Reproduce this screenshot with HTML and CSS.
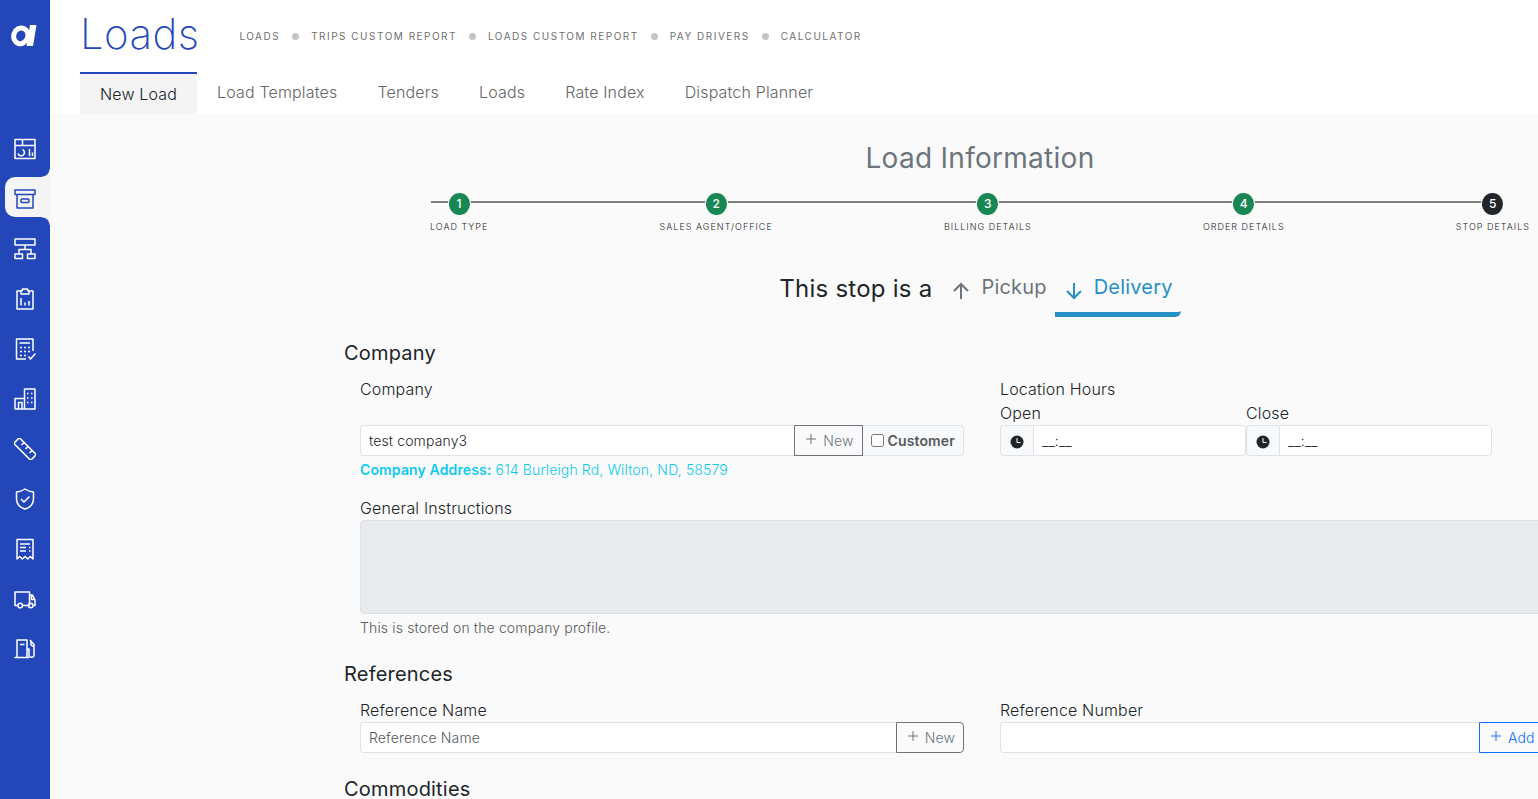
FILE: index.html
```html
<!DOCTYPE html>
<html lang="en">
<head>
<meta charset="utf-8">
<title>Loads</title>
<link rel="stylesheet" href="styles.css">
</head>
<body>
<div class="app">
  <aside class="sidebar">
    <a class="logo" href="#" aria-label="Home">
      <svg width="26" height="24" viewBox="0 0 26 24" fill="none" stroke="#fff"><ellipse cx="9.800" cy="12.800" rx="7" ry="8" stroke-width="5" transform="rotate(20 9.800 12.800)"/><path d="M19 2H25.500L22 23H15.500Z" fill="#fff" stroke="none"/></svg>
    </a>
    <nav class="side-nav">
      <a class="side-link" href="#" aria-label="Dashboard"><svg class="icon" viewBox="0 0 22 22"><path d="M1 1.500H21V20.500H1ZM1 7.500H21M8.500 1.500V7.500M15.500 11V18M18.500 14.500V18M8.500 11.500A3.300 3.300 0 1 1 4 15.500"/></svg></a>
      <a class="side-link active" href="#" aria-label="Loads"><svg class="icon" viewBox="0 0 22 22"><path d="M1 2H21V6.500H1ZM3 6.500V20H19V6.500"/><rect x="7" y="11" width="8" height="3.500" rx="1"/></svg></a>
      <a class="side-link" href="#" aria-label="Dispatch"><svg class="icon" viewBox="0 0 22 22"><path d="M1 1H21V7H1ZM11 7V11.500M5 16V11.500H17V16M1 16H8.500V20.500H1ZM13.500 16H21V20.500H13.500Z"/></svg></a>
      <a class="side-link" href="#" aria-label="Reports"><svg class="icon" viewBox="0 0 22 22"><path d="M7 3H3V21H19V3H15M7 2.500H8.500V1H13.500V2.500H15V6H7ZM7 10V17.500M11 14.500V17.500M15 13V17.500"/></svg></a>
      <a class="side-link" href="#" aria-label="Accounting"><svg class="icon" viewBox="0 0 22 22"><path d="M12 21H2.500V1H19V13M5.500 5H16M14.500 18.500L16.500 21L21.500 15.500"/><path class="dots" d="M6 9.500H8M10 9.500H12M14 9.500H16M6 13.500H8M10 13.500H12M14 13.500H16M6 17.500H8M10 17.500H12"/></svg></a>
      <a class="side-link" href="#" aria-label="Companies"><svg class="icon" viewBox="0 0 22 22"><path d="M1 21V10.500H10.500V1H21V21ZM10.500 10.500V21M4.500 21V14.500H8V21"/><path class="dots" d="M13 5.500H14.500M17 5.500H18.500M13 10H14.500M17 10H18.500M13 14.500H14.500M17 14.500H18.500"/></svg></a>
      <a class="side-link" href="#" aria-label="Mileage"><svg class="icon" viewBox="0 0 22 22"><rect x="-1" y="7" width="24" height="8" rx="1" transform="rotate(45 11 11)"/><path d="M10 4.500L7.500 7M14 8.500L11.500 11M18 12.500L15.500 15"/></svg></a>
      <a class="side-link" href="#" aria-label="Safety"><svg class="icon" viewBox="0 0 22 22"><path d="M11 1C14 3 17 3.700 19.500 4V11C19.500 16 16 20 11 21C6 20 2.500 16 2.500 11V4C5 3.700 8 3 11 1ZM7 11L10 14L15.500 8.500"/></svg></a>
      <a class="side-link" href="#" aria-label="Invoices"><svg class="icon" viewBox="0 0 22 22"><path d="M3 21V1.500H19V21L16.300 18.500L13.700 21L11 18.500L8.300 21L5.700 18.500ZM6 6H16M6 9.500H12M6 13H12M15 9.500H16.500M15 13H16.500"/></svg></a>
      <a class="side-link" href="#" aria-label="Trucks"><svg class="icon" viewBox="0 0 22 22"><path d="M3.500 17.500H1V4H15.500V17.500H9M15.500 7H18.500L21 12V17.500H19.500M17.500 7V11.500H21"/><circle cx="6.200" cy="17.500" r="2.300"/><circle cx="16.700" cy="17.500" r="2.300"/></svg></a>
      <a class="side-link" href="#" aria-label="Fuel"><svg class="icon" viewBox="0 0 22 22"><path d="M0.500 19.500H15M3 19.500V2H13V19.500M6 6.500H10.500M13 11H15V17C15 20 20 20 20 17V6.500L16 2M17 3V7L20 9"/></svg></a>
    </nav>
  </aside>

  <main class="page">
    <header class="page-head">
      <div class="title-row">
        <h1 class="title">Loads</h1>
        <nav class="crumbs">
          <a href="#">Loads</a><i></i><a href="#">Trips Custom Report</a><i></i><a href="#">Loads Custom Report</a><i></i><a href="#">Pay Drivers</a><i></i><a href="#">Calculator</a>
        </nav>
      </div>
      <nav class="tabs">
        <a class="tab current" href="#">New Load</a>
        <a class="tab" href="#">Load Templates</a>
        <a class="tab" href="#">Tenders</a>
        <a class="tab" href="#">Loads</a>
        <a class="tab" href="#">Rate Index</a>
        <a class="tab" href="#">Dispatch Planner</a>
      </nav>
    </header>

    <form class="content">
      <h2 class="form-title">Load Information</h2>
      <ol class="steps">
        <li class="step"><span class="num">1</span>Load Type</li>
        <li class="step"><span class="num">2</span>Sales Agent/Office</li>
        <li class="step"><span class="num">3</span>Billing Details</li>
        <li class="step"><span class="num">4</span>Order Details</li>
        <li class="step now"><span class="num">5</span>Stop Details</li>
      </ol>

      <div class="stop-type">
        <span class="stop-lead">This stop is a</span>
        <button class="stop-option" type="button"><svg class="arrow" viewBox="0 0 18 18"><path d="M9 17V2M2 9L9 2L16 9"/></svg>Pickup</button>
        <button class="stop-option chosen" type="button"><svg class="arrow" viewBox="0 0 18 18"><path d="M9 1V16M2 9L9 16L16 9"/></svg>Delivery</button>
      </div>

      <section class="section">
        <h3 class="section-title">Company</h3>
        <div class="fields">
          <div class="field">
            <label class="tall" for="company">Company</label>
            <div class="group">
              <input class="control" id="company" type="text" value="test company3">
              <button class="btn" type="button"><svg class="plus" viewBox="0 0 12 12"><path d="M6 1V11M1 6H11"/></svg>New</button>
              <label class="addon check"><input type="checkbox">Customer</label>
            </div>
            <p class="address"><strong>Company Address:</strong> 614 Burleigh Rd, Wilton, ND, 58579</p>
          </div>
          <div class="field">
            <span class="label">Location Hours</span>
            <div class="hours">
              <div class="field">
                <label for="open">Open</label>
                <div class="group"><span class="addon clock"><svg viewBox="0 0 14 14"><circle cx="7" cy="7" r="6.500"/><path d="M7 3V7.500H10.500"/></svg></span><input class="control" id="open" type="text" value="__:__"></div>
              </div>
              <div class="field">
                <label for="close">Close</label>
                <div class="group"><span class="addon clock"><svg viewBox="0 0 14 14"><circle cx="7" cy="7" r="6.500"/><path d="M7 3V7.500H10.500"/></svg></span><input class="control" id="close" type="text" value="__:__"></div>
              </div>
            </div>
          </div>
          <div class="field wide">
            <label for="instructions">General Instructions</label>
            <textarea class="control area" id="instructions" disabled></textarea>
            <p class="hint">This is stored on the company profile.</p>
          </div>
        </div>
      </section>

      <section class="section">
        <h3 class="section-title">References</h3>
        <div class="fields">
          <div class="field">
            <label for="ref-name">Reference Name</label>
            <div class="group">
              <input class="control" id="ref-name" type="text" placeholder="Reference Name">
              <button class="btn" type="button"><svg class="plus" viewBox="0 0 12 12"><path d="M6 1V11M1 6H11"/></svg>New</button>
            </div>
          </div>
          <div class="field ref-number">
            <label for="ref-number">Reference Number</label>
            <div class="group">
              <input class="control" id="ref-number" type="text">
              <button class="btn primary" type="button"><svg class="plus" viewBox="0 0 12 12"><path d="M6 1V11M1 6H11"/></svg>Add</button>
            </div>
          </div>
        </div>
      </section>

      <section class="section">
        <h3 class="section-title">Commodities</h3>
      </section>
    </form>
  </main>
</div>
</body>
</html>
```
FILE: styles.css
```css
* { box-sizing: border-box; letter-spacing: 0.01em; }

body {
  margin: 0;
  overflow: hidden;
  background: #fafafa;
  color: #212529;
  font: 300 16px/24px Inter, "Liberation Sans", sans-serif;
}

a { color: inherit; text-decoration: none; }
h1, h2, h3, p, ol { margin: 0; padding: 0; }
button, input, textarea { font: inherit; color: inherit; }

.app { display: flex; height: 100vh; }

/* Sidebar */
.sidebar {
  flex: 0 0 50px;
  background: #2347b9;
  color: #fff;
}
.logo { display: flex; justify-content: center; padding: 23px 2px 0 0; height: 124px; }
.side-nav { display: flex; flex-direction: column; }
.side-link {
  position: relative;
  display: flex;
  align-items: center;
  justify-content: center;
  height: 50px;
}
.icon {
  position: relative;
  width: 22px;
  height: 22px;
  fill: none;
  stroke: currentColor;
  stroke-width: 1.5;
  stroke-linejoin: round;
}
.side-link.active { color: #2347b9; }
.side-link.active::before {
  content: "";
  position: absolute;
  inset: 3px 0 7px 5px;
  border-radius: 10px 0 0 10px;
  background: #f4f4f4;
}
.side-link.active::after {
  content: "";
  position: absolute;
  top: -5px;
  right: 0;
  width: 8px;
  height: 56px;
  background:
    radial-gradient(circle at 0 0, transparent 7px, #f4f4f4 8px) top / 8px 8px no-repeat,
    radial-gradient(circle at 0 100%, transparent 7px, #f4f4f4 8px) bottom / 8px 8px no-repeat;
}

/* Page header */
.page { flex: 1 0 1860px; }
.page-head { padding: 0 30px; background: #fff; }
.title-row { display: flex; align-items: center; height: 72px; gap: 40px; }
.title { color: #2347b9; font-size: 42px; font-weight: 200; line-height: 68px; height: 72px; }
.crumbs {
  display: flex;
  align-items: center;
  gap: 12px;
  color: #707070;
  font-size: 10px;
  font-weight: 400;
  text-transform: uppercase;
}
.crumbs a { letter-spacing: 1.5px; }
.crumbs i { width: 7px; height: 7px; border-radius: 50%; background: #c4c4c4; }
.tabs { display: flex; }
.tab { padding: 8px 20px; color: #666; }
.tab.current { border-top: 2px solid #2347b9; background: #f4f4f4; color: #212529; }

/* Form */
.content { width: 1272px; margin: 0 auto; padding-top: 27px; }
.form-title {
  color: #6c757d;
  font-size: 28px;
  font-weight: 400;
  line-height: 34px;
  text-align: center;
}

.steps {
  position: relative;
  display: flex;
  justify-content: space-between;
  width: 1100px;
  margin: 18px auto 0;
  list-style: none;
  font-size: 9px;
  line-height: 12px;
  text-transform: uppercase;
}
.steps::before {
  content: "";
  position: absolute;
  inset: 8px 48px auto 1px;
  height: 2px;
  background: #7b807c;
}
.step {
  position: relative;
  display: flex;
  flex-direction: column;
  align-items: center;
  gap: 6px;
  letter-spacing: 1px;
}
.num {
  width: 21px;
  height: 22px;
  border-radius: 50%;
  box-shadow: 0 0 0 1px #fafafa;
  background: #198754;
  color: #fff;
  font-size: 12px;
  font-weight: 500;
  line-height: 22px;
  text-align: center;
}
.step.now .num { background: #212529; }

.stop-type { display: flex; justify-content: center; margin-top: 34px; }
.stop-lead { margin-right: 10px; font-size: 24px; font-weight: 400; line-height: 44px; }
.stop-option {
  display: flex;
  align-items: center;
  gap: 11px;
  height: 50px;
  padding: 0 8px 6px 10px;
  border: 0;
  border-bottom: 5px solid transparent;
  border-radius: 0 0 6px 0;
  background: none;
  color: #6c757d;
  font-size: 20px;
  font-weight: 400;
}
.stop-option.chosen { border-color: #268fc3; color: #268fc3; }
.arrow { width: 18px; height: 18px; margin-top: 8px; fill: none; stroke: currentColor; stroke-width: 2; }

.section { margin-top: 24px; }
.section-title { margin-bottom: 12px; font-size: 20px; font-weight: 400; }
.fields { display: grid; grid-template-columns: repeat(2, 1fr); gap: 16px 36px; padding: 0 12px 0 16px; }
.fields .wide { grid-column: 1 / -1; }
.ref-number { width: 90%; }
.field { display: flex; flex-direction: column; }
label.tall { padding-bottom: 24px; }
.hours { display: grid; grid-template-columns: repeat(2, 246px); }

.group { display: flex; height: 31px; }
.control {
  flex: 1;
  min-width: 0;
  padding: 4px 8px;
  border: 1px solid #dee2e6;
  border-radius: 4px;
  background: #fff;
  font-size: 14px;
}
.control::placeholder { color: #55595d; opacity: 1; }
.group .control:first-child { border-radius: 4px 0 0 4px; border-right: 0; }
.group .control:last-child { border-radius: 0 4px 4px 0; }
.area { flex: none; height: 94px; background: #e8ebee; resize: none; }

.btn {
  display: flex;
  align-items: center;
  gap: 6px;
  padding: 0 8px 0 10px;
  border: 1px solid #6c757d;
  background: none;
  color: #6c757d;
  font-size: 14px;
}
.btn:last-child { border-radius: 0 4px 4px 0; }
.btn.primary { border-color: #0d6efd; color: #0d6efd; }
.plus { width: 12px; height: 12px; margin-bottom: 4px; fill: none; stroke: currentColor; stroke-width: 1; }

.addon { display: flex; align-items: center; border: 1px solid #dee2e6; background: #f8f9fa; }
.check { gap: 4px; padding: 0 8px; border-left: 0; border-radius: 0 4px 4px 0; color: #55595d; font-size: 14px; font-weight: 600; }
.check input { width: 13px; height: 13px; margin: 0; }
.clock { flex: 0 0 33px; justify-content: center; border-right: 0; border-radius: 4px 0 0 4px; }
.clock svg { width: 14px; height: 14px; margin-top: 2px; fill: #212529; }
.clock path { fill: none; stroke: #fff; }

.address { margin-top: 3px; color: #0dcaf0; font-size: 14px; line-height: 21px; }
.address strong { font-weight: 600; }
.hint { margin-top: 3px; color: #55595d; font-size: 14px; line-height: 21px; }
```
